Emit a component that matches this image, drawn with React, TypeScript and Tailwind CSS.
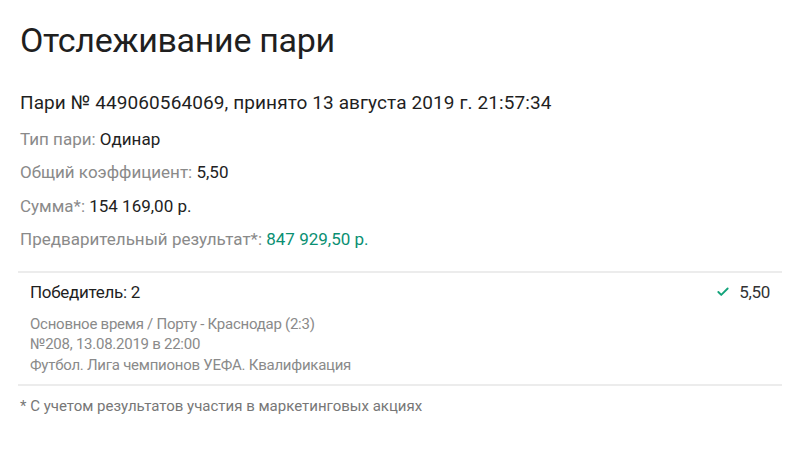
import { Check } from 'lucide-react';

const rows = [
  { label: 'Тип пари:', value: 'Одинар', green: false },
  { label: 'Общий коэффициент:', value: '5,50', green: false },
  { label: 'Сумма*:', value: '154 169,00 р.', green: false },
  { label: 'Предварительный результат*:', value: '847 929,50 р.', green: true },
];

export default function App() {
  return (
    <div className="min-h-[449px] w-[800px] bg-white px-[20px] pt-[18px] font-['Roboto',sans-serif] text-[#1f1f1f]">
      <h1 className="text-[34px] leading-[44px] font-normal tracking-[-0.3px]">Отслеживание пари</h1>

      <p className="mt-[30px] text-[19px] leading-[22px] tracking-[0.1px]">
        Пари № 449060564069, принято 13 августа 2019 г. 21:57:34
      </p>

      <div className="mt-[8.5px] flex flex-col">
        {rows.map((r) => (
          <div key={r.label} className="text-[17px] leading-[33.5px]">
            <span className="text-[#8a8a8a]">{r.label} </span>
            <span className={r.green ? 'text-[#0a8f72]' : 'text-[#222]'}>{r.value}</span>
          </div>
        ))}
      </div>

      <div className="mx-[-2px] mt-[14px] border-t-2 border-b-2 border-[#ececec] px-[12px] pt-[7px] pb-[9px]">
        <div className="flex items-center justify-between text-[17px] leading-[24px] tracking-[-0.3px]">
          <span>Победитель: 2</span>
          <span className="flex items-center gap-[9px] text-[#333]">
            <Check className="h-[14px] w-[14px] text-[#12a37a]" strokeWidth={3.2} />
            5,50
          </span>
        </div>
        <div className="mt-[10px] text-[15px] leading-[20.5px] tracking-[-0.25px] text-[#8a8a8a]">
          <p>Основное время / Порту - Краснодар (2:3)</p>
          <p>№208, 13.08.2019 в 22:00</p>
          <p>Футбол. Лига чемпионов УЕФА. Квалификация</p>
        </div>
      </div>

      <p className="mt-[11px] text-[15px] leading-[18px] text-[#777]">
        * С учетом результатов участия в маркетинговых акциях
      </p>
    </div>
  );
}
